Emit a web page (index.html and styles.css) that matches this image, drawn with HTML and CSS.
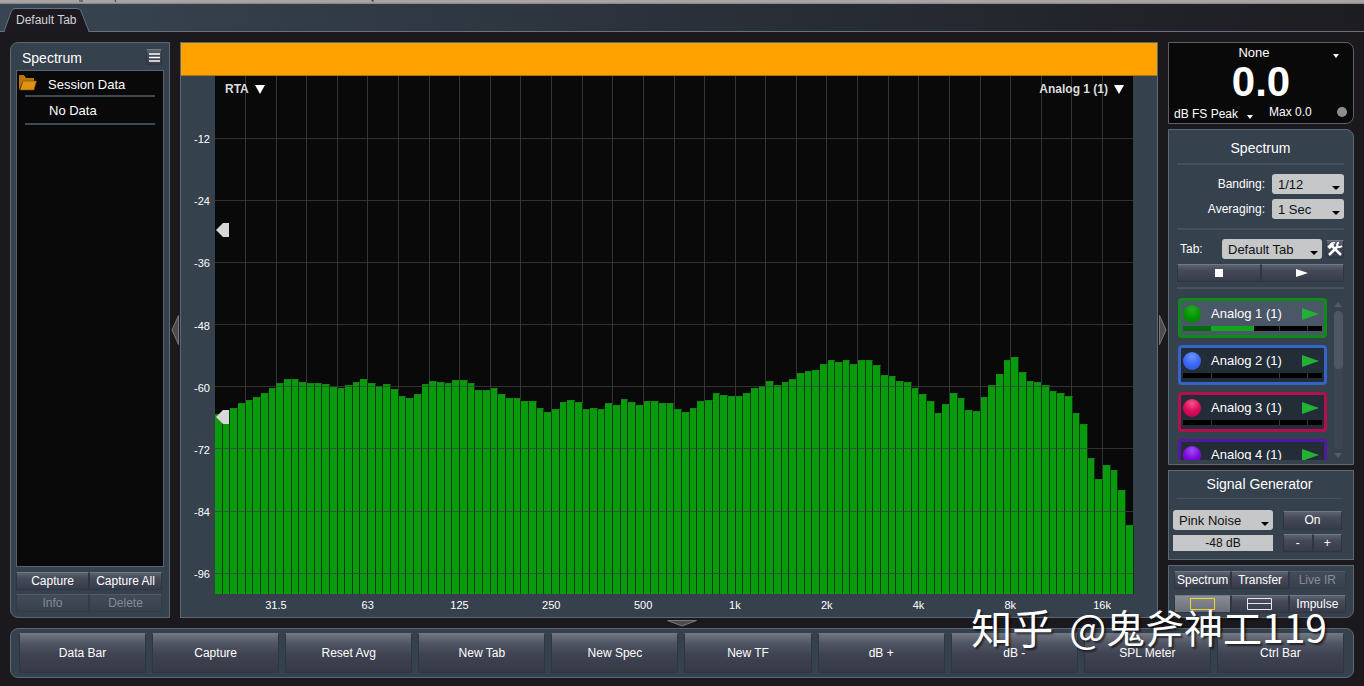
FILE: index.html
```html
<!DOCTYPE html>
<html lang="en">
<head>
    <meta charset="UTF-8">
    <meta name="viewport" content="width=device-width, initial-scale=1.0">
    <title>Spectrum</title>
    <link rel="stylesheet" href="styles.css">
</head>
<body>
    <div class="titlebar">
        <svg width="400" height="4" aria-hidden="true">
            <path d="M79 1h4M115 0l1 2M372 0v1h2" fill="none" stroke="#333"/>
        </svg>
    </div>

    <nav class="tabbar">
        <svg class="tab-shape" width="92" height="24" aria-hidden="true">
            <path d="M0 23.500H4L11 4Q12 .5 15 .5H77Q80 .5 81 3L89 23.500H92" fill="#1c1a20" stroke="#66727c"/>
            <path d="M5 23.500H88" stroke="#1c1a20" stroke-width="2"/>
        </svg>
        <a class="tab" href="#">Default Tab</a>
    </nav>

    <main class="main">
        <section class="panel data-bar">
            <div class="data-head">
                <h2>Spectrum</h2>
                <button class="btn menu-btn" aria-label="Menu">
                    <svg width="11" height="9"><path d="M0 1h11M0 4.500h11M0 8h11" stroke="#fff" stroke-width="1.500"/></svg>
                </button>
            </div>
            <ul class="data-list">
                <li class="folder">
                    <svg width="18" height="16" viewBox="0 0 18 16">
                        <path d="M0 15V1q0-1 1-1h4l2 3h8v3H4L0 15z" fill="#b87708"/>
                        <path d="M1 15L4 6h13.500L15 15z" fill="#e0930f" stroke="#7d4c00" stroke-width=".6"/>
                    </svg>
                    Session Data
                </li>
                <li>No Data</li>
            </ul>
            <div class="btn-grid two">
                <button class="btn">Capture</button>
                <button class="btn">Capture All</button>
                <button class="btn" disabled>Info</button>
                <button class="btn" disabled>Delete</button>
            </div>
        </section>

        <button class="fold" aria-label="Hide data bar">
            <svg width="8" height="30"><path d="M7.500 .5v29L1 15z" fill="#4c4c50" stroke="#77777c"/></svg>
        </button>

        <section class="graph">
            <div class="graph-title"></div>
            <div class="graph-body">
                <div class="y-axis">
                    <span>-12</span><span>-24</span><span>-36</span><span>-48</span>
                    <span>-60</span><span>-72</span><span>-84</span><span>-96</span>
                </div>
                <div class="plot">
                    <svg class="grid" id="grid-v" aria-hidden="true"></svg>
                    <div class="bars" id="bars"></div>
                    <svg class="grid over" id="grid-h" aria-hidden="true"></svg>
                    <button class="plot-menu left">RTA <i></i></button>
                    <button class="plot-menu right">Analog 1 (1) <i></i></button>
                    <svg class="marker upper" width="14" height="14"><path d="M1 7L8 0h6v14H8z" fill="#d8d8d8"/></svg>
                    <svg class="marker lower" width="14" height="14"><path d="M1 7L8 0h6v14H8z" fill="#d8d8d8"/></svg>
                </div>
                <div class="x-axis">
                    <span>31.5</span><span>63</span><span>125</span><span>250</span><span>500</span>
                    <span>1k</span><span>2k</span><span>4k</span><span>8k</span><span>16k</span>
                </div>
            </div>
        </section>

        <button class="fold" aria-label="Hide control bar">
            <svg width="8" height="30"><path d="M.5 .5v29L7 15z" fill="#4c4c50" stroke="#77777c"/></svg>
        </button>

        <aside class="control-bar">
            <section class="meter">
                <div class="pick plain">
                    <select aria-label="Meter input"><option>None</option></select>
                </div>
                <div class="meter-value">0.0</div>
                <div class="meter-foot">
                    <div class="pick plain">
                        <select aria-label="Meter type"><option>dB FS Peak</option></select>
                    </div>
                    <span>Max 0.0</span>
                    <i class="clip"></i>
                </div>
            </section>

            <section class="panel settings">
                <h2>Spectrum</h2>
                <div class="fields">
                    <label for="banding">Banding:</label>
                    <div class="pick"><select id="banding"><option>1/12</option></select></div>
                    <label for="averaging">Averaging:</label>
                    <div class="pick"><select id="averaging"><option>1 Sec</option></select></div>
                </div>
                <div class="tab-row">
                    <label for="tab">Tab:</label>
                    <div class="pick"><select id="tab"><option>Default Tab</option></select></div>
                    <button class="btn tools" aria-label="Configure">
                        <svg width="16" height="16" viewBox="0 0 16 16" fill="none" stroke="#fff">
                            <path d="M2 14L11 5" stroke-width="2.500"/>
                            <path d="M12 1.500q-2.500 1-1.500 3.500t4.500 0" stroke-width="2"/>
                            <path d="M5 5l9 9" stroke-width="2.500"/>
                            <path d="M1.500 7l4.500-4.500" stroke-width="3.500"/>
                            <path d="M4 3q2-2 4-1" stroke-width="1.500"/>
                        </svg>
                    </button>
                </div>
                <div class="btn-grid two transport">
                    <button class="btn" aria-label="Stop"><svg width="8" height="8"><path d="M0 0h8v8H0z" fill="#fff"/></svg></button>
                    <button class="btn" aria-label="Play"><svg width="12" height="8"><path d="M0 0l12 4-12 4z" fill="#fff"/></svg></button>
                </div>
                <div class="channels">
                    <ul class="channel-list">
                        <li class="channel green active">
                            <i class="dot"></i><span>Analog 1 (1)</span>
                            <button class="run" aria-label="Run Analog 1"></button>
                            <div class="level"></div>
                        </li>
                        <li class="channel blue">
                            <i class="dot"></i><span>Analog 2 (1)</span>
                            <button class="run" aria-label="Run Analog 2"></button>
                            <div class="level"></div>
                        </li>
                        <li class="channel red">
                            <i class="dot"></i><span>Analog 3 (1)</span>
                            <button class="run" aria-label="Run Analog 3"></button>
                            <div class="level"></div>
                        </li>
                        <li class="channel purple">
                            <i class="dot"></i><span>Analog 4 (1)</span>
                            <button class="run" aria-label="Run Analog 4"></button>
                            <div class="level"></div>
                        </li>
                    </ul>
                    <div class="scroll">
                        <svg width="8" height="5"><path d="M0 5l4-5 4 5z" fill="#555b66"/></svg>
                        <div class="track"><div class="thumb"></div></div>
                        <svg width="8" height="5"><path d="M0 0l4 5 4-5z" fill="#555b66"/></svg>
                    </div>
                </div>
            </section>

            <section class="panel generator">
                <h2>Signal Generator</h2>
                <div class="gen-grid">
                    <div class="pick"><select aria-label="Signal"><option>Pink Noise</option></select></div>
                    <button class="btn">On</button>
                    <input class="gen-level" type="text" value="-48 dB" aria-label="Level">
                    <div class="btn-grid two">
                        <button class="btn">-</button>
                        <button class="btn">+</button>
                    </div>
                </div>
            </section>

            <section class="panel views">
                <div class="btn-grid three">
                    <button class="btn">Spectrum</button>
                    <button class="btn">Transfer</button>
                    <button class="btn" disabled>Live IR</button>
                    <button class="btn selected" aria-label="Single view"><svg width="25" height="12"><path d="M.5 .5h24v11H.5z" fill="none" stroke="#e6d62e"/></svg></button>
                    <button class="btn" aria-label="Split view"><svg width="25" height="12"><path d="M.5 .5h24v11H.5zM.5 5.500h24" fill="none" stroke="#e8e8e8"/></svg></button>
                    <button class="btn">Impulse</button>
                </div>
            </section>
        </aside>
    </main>

    <button class="fold flat" aria-label="Hide command bar">
        <svg width="30" height="7"><path d="M.5 .5h29L15 6z" fill="#4c4c50" stroke="#77777c"/></svg>
    </button>

    <footer class="panel command-bar">
        <button class="btn">Data Bar</button>
        <button class="btn">Capture</button>
        <button class="btn">Reset Avg</button>
        <button class="btn">New Tab</button>
        <button class="btn">New Spec</button>
        <button class="btn">New TF</button>
        <button class="btn">dB +</button>
        <button class="btn">dB -</button>
        <button class="btn">SPL Meter</button>
        <button class="btn">Ctrl Bar</button>
    </footer>

    <div class="watermark" lang="zh-CN"><b>知乎</b><span>@鬼斧神工119</span></div>

    <script src="app.js"></script>
</body>
</html>
```

FILE: styles.css
```css
* {
    box-sizing: border-box;
}
body {
    margin: 0;
    height: 100vh;
    min-height: 640px;
    display: flex;
    flex-direction: column;
    overflow: hidden;
    background: #1b191e;
    color: #fff;
    font: 12px/16px "Liberation Sans", Arial, sans-serif;
}
h2 {
    margin: 0;
    font-size: 14px;
    font-weight: normal;
    line-height: 18px;
}
ul {
    list-style: none;
    margin: 0;
    padding: 0;
}
button, select, input {
    font: inherit;
    color: inherit;
    margin: 0;
    padding: 0;
    border: none;
    background: none;
}
svg {
    display: block;
}

/* top strip and tabs */
.titlebar {
    height: 4px;
    background: linear-gradient(#a8a5a4 50%, #858383);
}
.titlebar svg {
    overflow: hidden;
}
.tabbar {
    position: relative;
    height: 28px;
    background: linear-gradient(90deg, #384552, #1d1c21);
    border-bottom: 1px solid #66727c;
    margin-bottom: 10px;
}
.tab-shape {
    position: absolute;
    left: 0;
    bottom: -1px;
}
.tab {
    position: relative;
    display: block;
    padding: 8px 16px 0;
    color: #d4d4d6;
    text-decoration: none;
}

/* shared parts */
.panel {
    background: #35414d;
    border: 1px solid #5d6872;
}
.btn {
    display: flex;
    align-items: center;
    justify-content: center;
    background: linear-gradient(#5d6270, #454a59 35%, #383b49);
    border: 1px solid #2e3643;
    border-top-color: #727884;
    white-space: nowrap;
}
.btn:disabled {
    color: #858b93;
    background: linear-gradient(#424c58, #37404c);
    border-color: #323b47;
    border-top-color: #505a66;
}
.btn.selected {
    background: linear-gradient(#8a8c95, #6c6f79);
}
.btn-grid {
    display: grid;
    grid-auto-rows: 18px;
}
.two {
    grid-template-columns: 1fr 1fr;
}
.three {
    grid-template-columns: 1fr 1fr 1fr;
}
.pick {
    position: relative;
}
.pick select {
    appearance: none;
    display: block;
    width: 100%;
    height: 20px;
    padding: 2px 6px 0;
    background: #c5c7c9;
    border-radius: 3px;
    color: #111;
    font-size: 13px;
}
.pick::after {
    content: "";
    position: absolute;
    right: 4px;
    bottom: 4px;
    border: 4px solid transparent;
    border-top: 4px solid #000;
    border-bottom: none;
    pointer-events: none;
}
.pick.plain select {
    background: none;
    color: #fff;
}
.pick.plain::after {
    border-width: 3px;
    border-top: 4px solid #fff;
    border-bottom: none;
}

.main {
    flex: 1;
    min-height: 0;
    display: grid;
    grid-template-columns: 160px 10px minmax(0, 1fr) 10px 186px;
    padding: 0 10px;
}
.fold {
    display: flex;
    align-items: center;
    justify-content: center;
}
.fold.flat {
    height: 10px;
    flex: none;
}

/* data bar */
.data-bar {
    display: flex;
    flex-direction: column;
    border-radius: 8px 0 0 8px;
    padding: 6px 5px 5px;
}
.data-head {
    display: flex;
    justify-content: space-between;
    padding: 0 2px 3px 6px;
}
.menu-btn {
    width: 16px;
    height: 16px;
}
.data-list {
    flex: 1;
    background: #09090a;
    border: 1px solid #59636e;
    margin-bottom: 5px;
    font-size: 13px;
}
.data-list li {
    height: 28px;
    margin: 0 8px;
    padding: 5px 0 0 24px;
    line-height: 18px;
    border-bottom: 2px solid #3e4852;
}
.data-list li.folder {
    position: relative;
    height: 26px;
    padding: 5px 0 0 23px;
}
.folder svg {
    position: absolute;
    left: -6px;
    top: 4px;
}
.data-bar .btn-grid {
    row-gap: 4px;
    padding-right: 2px;
}

/* graph */
.graph {
    display: flex;
    flex-direction: column;
    background: #35414d;
    border: 1px solid #5d6872;
}
.graph-title {
    height: 33px;
    background: #ffa200;
    border-bottom: 1px solid #a8761c;
}
.graph-body {
    flex: 1;
    min-height: 0;
    display: grid;
    grid-template: minmax(0, 1fr) 23px / 34px minmax(0, 1fr);
    padding-right: 24px;
    font-size: 11px;
}
.y-axis {
    display: grid;
    grid-template-rows: repeat(8, 12fr) 4fr;
    text-align: right;
    padding-right: 5px;
}
.y-axis span {
    align-self: end;
    margin-bottom: -9px;
}
.x-axis {
    grid-column: 2;
    display: grid;
    grid-template-columns: repeat(10, 1fr);
    margin: 3px -15px 0 15px;
    text-align: center;
}
.plot {
    position: relative;
    background: #09090a;
}
.grid {
    position: absolute;
    width: 100%;
    height: 100%;
    stroke: #353538;
    shape-rendering: crispEdges;
}
.grid.over {
    top: 0;
    stroke: rgba(60, 64, 64, .75);
}
.bars {
    position: relative;
    display: flex;
    align-items: flex-end;
    height: 100%;
}
.bar {
    flex: 1;
    background: #0a9a0d;
    border-right: 1px solid #053a07;
    border-top: 1px solid #15860f;
}
.plot-menu {
    position: absolute;
    top: 5px;
    display: flex;
    align-items: center;
    gap: 6px;
    font-size: 12px;
    font-weight: bold;
    color: #dcdcdc;
}
.plot-menu i {
    border: 5px solid transparent;
    border-top: 9px solid #fff;
    border-bottom: none;
}
.plot-menu.left {
    left: 10px;
}
.plot-menu.right {
    right: 9px;
}
.marker {
    position: absolute;
    left: 0;
}
.marker.upper {
    top: 28.300%;
}
.marker.lower {
    top: 64.500%;
}

/* control bar */
.control-bar {
    display: flex;
    flex-direction: column;
    gap: 5px;
    min-height: 0;
}
.meter {
    background: #09090a;
    border: 1px solid #5d6068;
    border-radius: 0 8px 8px 0;
    height: 82px;
}
.meter > .pick select {
    text-align: center;
    text-align-last: center;
    padding: 0 22px 0 8px;
}
.meter > .pick::after {
    right: 14px;
    bottom: 5px;
}
.meter-value {
    font-size: 42px;
    font-weight: bold;
    line-height: 38px;
    text-align: center;
}
.meter-foot {
    display: flex;
    align-items: center;
    gap: 10px;
    padding: 1px 6px 0 5px;
}
.meter-foot .pick select {
    font-size: 12px;
    padding: 4px 20px 0 0;
}
.meter-foot .pick::after {
    right: 6px;
    bottom: 3px;
}
.meter-foot .clip {
    width: 10px;
    height: 10px;
    margin-left: auto;
    border-radius: 50%;
    background: #8e8e8e;
}
.settings, .generator {
    text-align: center;
}
.settings {
    flex: 1;
    min-height: 0;
    display: flex;
    flex-direction: column;
    border-radius: 0 8px 0 0;
    padding: 9px 9px 4px 8px;
}
.settings h2 {
    padding-bottom: 6px;
    border-bottom: 2px solid #47515e;
}
.fields {
    display: grid;
    grid-template-columns: 1fr 72px;
    gap: 5px 7px;
    align-items: center;
    text-align: right;
    padding: 9px 0;
    border-bottom: 2px solid #47515e;
}
.tab-row {
    display: flex;
    align-items: center;
    padding: 9px 0 5px 3px;
}
.tab-row .pick {
    flex: 0 0 100px;
    margin-left: auto;
}
.tools {
    width: 18px;
    height: 18px;
    margin-left: 4px;
}
.transport {
    padding-bottom: 5px;
    border-bottom: 2px solid #47515e;
}
.channels {
    flex: 1;
    min-height: 0;
    display: flex;
    gap: 5px;
    padding: 9px 0 0 1px;
}
.channel-list {
    flex: 1;
    overflow: hidden;
}
.channel {
    display: grid;
    grid-template: 22px 7px / 20px 1fr 20px;
    column-gap: 8px;
    align-items: center;
    height: 40px;
    margin-bottom: 7px;
    padding: 2px;
    border: 3px solid;
    border-radius: 4px;
    background: #232d38;
    text-align: left;
    font-size: 13px;
}
.channel.active {
    background: #4a5767;
}
.green {
    border-color: #0f8c18;
}
.blue {
    border-color: #3563c9;
}
.red {
    border-color: #b5104d;
}
.purple {
    border-color: #5317a0;
}
.dot {
    width: 18px;
    height: 18px;
    border-radius: 50%;
    background: radial-gradient(circle at 50% 25%, #27ab27, #029702 50%, #027a04);
}
.blue .dot {
    background: radial-gradient(circle at 50% 25%, #6d93ff, #3b68f5 50%, #2d55d0);
}
.red .dot {
    background: radial-gradient(circle at 50% 25%, #f0558a, #dc0a5a 50%, #b00548);
}
.purple .dot {
    background: radial-gradient(circle at 50% 25%, #a04ef5, #7d0ae0 50%, #6205b4);
}
.run {
    width: 0;
    height: 0;
    border: 6px solid transparent;
    border-left: 17px solid #22b035;
    border-right: none;
}
.level {
    grid-column: 1 / 4;
    height: 5px;
    background: linear-gradient(90deg, transparent 69%, #333d47 69% 70%, transparent 70% 89%, #333d47 89% 90%, transparent 90%),
        linear-gradient(90deg, #000 20%, #333d47 20% 21%, #000 21%);
}
.active .level {
    background: linear-gradient(90deg, transparent 69%, #333d47 69% 70%, transparent 70% 89%, #333d47 89% 90%, transparent 90%),
        linear-gradient(90deg, #076a10 20%, #12a81e 20% 51%, #000 51%);
}
.scroll {
    width: 12px;
    display: flex;
    flex-direction: column;
    align-items: center;
    gap: 4px;
    padding: 4px 0 2px;
}
.track {
    flex: 1;
    width: 9px;
    border-radius: 5px;
    background: #3d4551;
}
.thumb {
    height: 42%;
    border-radius: 5px;
    background: #4f5763;
}
.generator {
    padding: 4px 3px 7px 4px;
}
.generator h2 {
    margin: 0 8px 0 4px;
    padding-bottom: 5px;
    border-bottom: 1px solid #47515e;
}
.gen-grid {
    display: grid;
    grid-template-columns: 100px 59px;
    justify-content: space-between;
    align-items: center;
    gap: 4px;
    padding: 11px 8px 0 0;
}
.gen-level {
    width: 100%;
    height: 16px;
    background: #c5c7c9;
    color: #111;
    text-align: center;
}
.gen-grid > .btn {
    height: 19px;
}
.views {
    border-radius: 0 0 8px 0;
    padding: 5px 5px 4px;
}
.views .btn-grid {
    row-gap: 6px;
    padding-right: 2px;
}

/* command bar */
.command-bar {
    flex: none;
    display: grid;
    grid-template-columns: repeat(10, 1fr);
    gap: 6px;
    margin: 0 10px 8px;
    padding: 4px 9px 4px 8px;
    height: 50px;
    border-radius: 8px;
}
.command-bar .btn {
    background: linear-gradient(#70757f, #505563 25%, #3f4351 55%, #363946);
}

.watermark {
    position: absolute;
    right: 37px;
    bottom: 32px;
    display: flex;
    align-items: center;
    gap: 16px;
    font: 39px/56px "Noto Sans CJK SC", sans-serif;
    text-shadow: 2px 2px 2px rgba(0, 0, 0, .6);
    pointer-events: none;
}
.watermark b {
    font-size: 41px;
    font-weight: normal;
}
```

FILE: app.js
```js
// 1/12 octave band levels, dB
const levels = [
    65.9, 65.3, 64.7, 63.9, 63.2, 62.6, 61.8, 61.0, 60.0, 59.1, 59.1, 59.7,
    60.0, 60.0, 60.2, 60.7, 61.0, 60.4, 59.7, 59.1, 60.0, 60.6, 60.2, 61.2,
    62.4, 62.8, 62.0, 60.2, 59.5, 59.7, 60.0, 59.3, 59.3, 60.0, 61.4, 61.4,
    61.0, 62.0, 62.9, 62.9, 63.5, 63.5, 64.7, 65.5, 64.9, 63.7, 63.3, 63.7,
    64.9, 64.7, 64.9, 63.9, 64.3, 63.1, 63.7, 64.3, 63.5, 63.5, 63.9, 63.9,
    64.9, 65.6, 64.7, 63.5, 63.3, 61.8, 62.2, 62.4, 62.4, 61.8, 61.0, 60.6,
    59.5, 60.4, 59.7, 59.1, 58.1, 57.7, 57.4, 56.2, 55.6, 56.0, 55.6, 56.2,
    55.6, 55.6, 56.4, 58.5, 58.7, 59.5, 59.7, 61.0, 62.0, 63.5, 65.8, 64.1,
    61.8, 62.9, 65.1, 65.3, 62.7, 60.4, 58.3, 55.6, 55.0, 57.9, 59.5, 59.7,
    60.4, 61.6, 61.8, 62.5, 65.8, 67.9, 74.5, 78.4, 75.7, 76.8, 80.7, 87.3
];

const floor = 100.7;
const bars = document.getElementById('bars');

levels.forEach(level => {
    const bar = document.createElement('div');
    bar.className = 'bar';
    bar.style.height = (floor - level) + '%';
    bars.appendChild(bar);
});

function addLine(id, x1, y1, x2, y2) {
    const line = document.createElementNS('http://www.w3.org/2000/svg', 'line');
    line.setAttribute('x1', x1 + '%');
    line.setAttribute('y1', y1 + '%');
    line.setAttribute('x2', x2 + '%');
    line.setAttribute('y2', y2 + '%');
    document.getElementById(id).appendChild(line);
}

// third octave lines
for (let i = 1; i < 30; i++) {
    addLine('grid-v', i * 100 / 30, 0, i * 100 / 30, 100);
}

// every 12 dB
for (let db = 12; db < 100; db += 12) {
    addLine('grid-h', 0, db, 100, db);
}
```
